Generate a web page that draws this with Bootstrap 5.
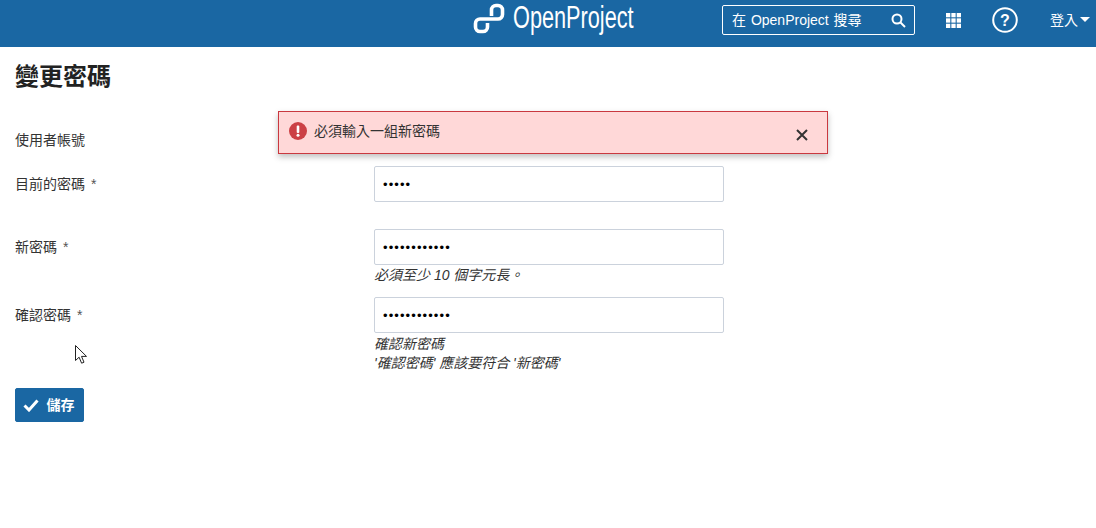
<!doctype html>
<html lang="zh-Hant">
<head>
<meta charset="utf-8">
<title>變更密碼</title>
<link href="https://cdn.jsdelivr.net/npm/bootstrap@5.3.0/dist/css/bootstrap.min.css" rel="stylesheet">
<style>
html,body{height:528px;overflow:hidden;background:#fff}
body{font-family:"Liberation Sans","Noto Sans CJK TC",sans-serif;font-size:14px;color:#333;position:relative}
.top-bar{height:47px;background:#1a67a3;color:#fff;position:relative}
.brand{position:absolute;left:473px;top:0;height:36px;display:flex;align-items:center;gap:8px}
.brand svg{margin-top:2px}
.brand-word{font-family:"Liberation Sans",sans-serif;font-weight:400;font-size:31px;line-height:36px;display:inline-block;transform:scaleX(.7);transform-origin:left center;white-space:nowrap;color:#fff}
.search-box{position:absolute;left:722px;top:5px;width:193px;height:30px;border:1px solid #fff;border-radius:2px;display:flex;align-items:center;justify-content:space-between;padding:0 8px 0 9px;font-size:14px;color:#fff;word-spacing:1px}
.ic-grid{position:absolute;left:946px;top:13px}
.ic-help{position:absolute;left:992px;top:7px}
.login{position:absolute;left:1050px;top:11px;font-size:14px;line-height:18px;display:flex;align-items:center;gap:2px;color:#fff}
.caret-dn{width:0;height:0;border-left:5px solid transparent;border-right:5px solid transparent;border-top:5px solid #fff;display:inline-block;margin-top:-1px}
.page-body{padding:0 15px}
.page-title{font-size:24px;font-weight:700;line-height:30px;margin:15px 0 0;color:#222}
.form-line{display:flex}
.form-lab{width:359px;flex:none;line-height:20px;color:#333}
.form-lab .req{color:#555;margin-left:2px}
.form-val{width:350px;flex:none}
.line-user{margin-top:30px;height:44px}
.line-cur{height:63px}
.line-new{height:68px}
.line-conf{height:91px}
.lab-offset{padding-top:8px}
.pw-input{display:block;width:350px;height:36px;border:1px solid #cbd2dc;border-radius:2px;padding:0 8px;font-size:13px;letter-spacing:1.1px;color:#000;background:#fff;outline:0}
.hint{font-style:italic;font-size:14px;line-height:19px;color:#333}
.hint-first{margin-top:1px}
.hint-second{margin-top:2px}
.save-btn{--bs-btn-bg:#1a67a3;--bs-btn-border-color:#1a67a3;--bs-btn-color:#fff;--bs-btn-hover-bg:#1a67a3;--bs-btn-hover-color:#fff;--bs-btn-padding-x:0;--bs-btn-padding-y:0;--bs-btn-font-size:14px;--bs-btn-font-weight:700;--bs-btn-border-radius:2px;width:69px;height:34px;display:flex;align-items:center;justify-content:center;gap:8px;padding-right:2px}
.flash{position:absolute;left:278px;top:111px;width:550px;height:43px;background:#ffd8d8;border:1px solid #c9383f;box-shadow:0 3px 6px rgba(0,0,0,.25);display:flex;align-items:center;padding:0 19px 2px 10px;gap:7px;color:#333;font-size:14px}
.flash svg.ic-err{margin-top:-1px}
.flash-x{margin-left:auto;margin-top:6px;line-height:0;background:none;border:0;padding:0}
.pointer{position:absolute;left:75px;top:345px}
</style>
</head>
<body>
<header class="top-bar">
  <div class="brand">
    <svg width="32" height="32" viewBox="0 0 32 32" fill="none" stroke="#fff" stroke-width="3.6"><path d="M18.500 13V7A4.500 4.500 0 0 1 23 2.500h2A4.500 4.500 0 0 1 29.500 7v4.500A4.500 4.500 0 0 1 25 16H7a4.500 4.500 0 0 0-4.500 4.500V24A4.500 4.500 0 0 0 7 28.500h3a4.500 4.500 0 0 0 4.500-4.500v-4"/></svg>
    <span class="brand-word">OpenProject</span>
  </div>
  <div class="search-box"><span>在 OpenProject 搜尋</span>
    <svg width="15" height="15" viewBox="0 0 15 15" fill="none" stroke="#fff" stroke-width="2"><circle cx="6" cy="6" r="4.500"/><path d="M9.500 9.500l4.500 4.500"/></svg>
  </div>
  <svg class="ic-grid" width="15" height="15" viewBox="0 0 14 14" fill="#fff"><rect width="4" height="4"/><rect x="5" width="4" height="4"/><rect x="10" width="4" height="4"/><rect y="5" width="4" height="4"/><rect x="5" y="5" width="4" height="4"/><rect x="10" y="5" width="4" height="4"/><rect y="10" width="4" height="4"/><rect x="5" y="10" width="4" height="4"/><rect x="10" y="10" width="4" height="4"/></svg>
  <svg class="ic-help" width="26" height="26" viewBox="0 0 26 26"><circle cx="13" cy="13" r="11.800" fill="none" stroke="#fff" stroke-width="2"/><text x="13" y="19" text-anchor="middle" fill="#fff" font-family="Liberation Sans" font-weight="700" font-size="16">?</text></svg>
  <div class="login"><span>登入</span><i class="caret-dn"></i></div>
</header>
<main class="page-body">
  <h1 class="page-title">變更密碼</h1>
  <form onsubmit="return false">
    <div class="form-line line-user"><div class="form-lab lab-offset">使用者帳號</div></div>
    <div class="form-line line-cur"><div class="form-lab lab-offset">目前的密碼<span class="req"> *</span></div><div class="form-val"><input class="pw-input" type="password" value="aaaaa" aria-label="目前的密碼"></div></div>
    <div class="form-line line-new"><div class="form-lab lab-offset">新密碼<span class="req"> *</span></div><div class="form-val"><input class="pw-input" type="password" value="aaaaaaaaaaaa" aria-label="新密碼"><div class="hint hint-first">必須至少 10 個字元長。</div></div></div>
    <div class="form-line line-conf"><div class="form-lab lab-offset">確認密碼<span class="req"> *</span></div><div class="form-val"><input class="pw-input" type="password" value="aaaaaaaaaaaa" aria-label="確認密碼"><div class="hint hint-second">確認新密碼</div><div class="hint">'確認密碼' 應該要符合 '新密碼'</div></div></div>
    <button class="btn save-btn" type="submit">
      <svg width="16" height="13" viewBox="0 0 16 13" fill="none" stroke="#fff" stroke-width="3"><path d="M1.500 6.500l4.500 4.500 8.500-9.500"/></svg><span>儲存</span>
    </button>
  </form>
</main>
<div class="flash" role="alert">
  <svg class="ic-err" width="18" height="18" viewBox="0 0 18 18"><circle cx="9" cy="9" r="9" fill="#cc4045"/><rect x="7.700" y="3.500" width="2.600" height="7.500" rx="1" fill="#fff"/><circle cx="9" cy="13.300" r="1.500" fill="#fff"/></svg>
  <span>必須輸入一組新密碼</span>
  <button class="flash-x" type="button" aria-label="Close"><svg width="12" height="12" viewBox="0 0 12 12" stroke="#333" stroke-width="2"><path d="M1 1l10 10M11 1L1 11"/></svg></button>
</div>
<svg class="pointer" width="14" height="20" viewBox="0 0 14 20"><path d="M.5.5v15l3.600-3.300 2.500 6 2.400-1-2.500-5.800h5z" fill="#fff" stroke="#222" stroke-width="1"/></svg>
<script src="https://cdn.jsdelivr.net/npm/bootstrap@5.3.0/dist/js/bootstrap.bundle.min.js"></script>
</body>
</html>
